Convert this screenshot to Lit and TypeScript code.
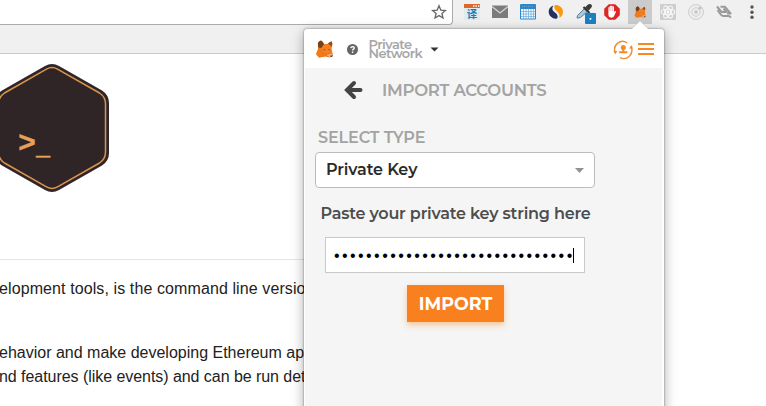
import { LitElement, html, svg, css } from "lit";
import { customElement } from "lit/decorators.js";

const fox = svg`
  <path d="M2 3L5 .5L8 4L11 4L15.500 1.200L16.500 4L15.500 9L17 15.500L14 17.500L9 16.500L3 17.500L0 14L2 9Z" fill="#ec7a1c"/>
  <path d="M1.800 4Q2 1 5 .5Q7.500 1.500 8 4.500L5.500 8L2.500 7.500Z" fill="#75401d"/>
  <path d="M12 3.300L15.500 1.200L16.200 4L15.500 6.500Z" fill="#8f4a1c"/>
  <path d="M5.500 8L8 4.500L11.500 4.500L15 7L13.500 13L8 13Z" fill="#f48023"/>
  <path d="M0 14L4 11L9 16.500L3 17.500Z" fill="#f47a17"/>
  <path d="M7.600 9l1.800 .8l-1.200 .6zM12.200 9.500l1.500-.5l-.6 1.400z" fill="#6a3411"/>
  <path d="M10.500 15L16 13.500L17 15.500L14 17.200Z" fill="#e2b28f"/>
  <path d="M14.500 15.500h2.500l-1 1.500h-1.500z" fill="#4a4543"/>`;

const extensionIcons = [
  svg`<rect x="6" y="4" width="16" height="16" fill="#e3eaed"/>
    <rect x="6" y="4" width="16" height="4" fill="#d96a2b"/>
    <path d="M15 6h1.400M17.500 6h1.400M20 6h1.400" stroke="#fff" stroke-width="1.300"/>
    <text x="14" y="18" text-anchor="middle" font-size="10.500" font-weight="700" fill="#1b7fb5" font-family="Noto Sans CJK SC, sans-serif">译</text>`,
  svg`<path d="M6 5.500h16v12.500H6z" fill="#7b7b7b"/><path d="M6 6.500l8 6.500l8-6.500" fill="none" stroke="#d6d6d6" stroke-width="1.200"/>`,
  svg`<rect x="6" y="4" width="16" height="15.500" rx="1" fill="#2f86c8"/>
    <path d="M7 9h14v9.500H7z" fill="#f5faff"/>
    <path d="M9.500 9v10M12 9v10M14.500 9v10M17 9v10M19.500 9v10M7 11.500h14M7 14h14M7 16.500h14" stroke="#69abd9" stroke-width=".7"/>
    <path d="M8 6.500h12" stroke="#5ea4d7" stroke-width="1" stroke-dasharray="1 1"/>`,
  svg`<path d="M11.500 5.400C6.200 7 5.200 13 9 16.800C10.700 18.500 13.200 19 15 18.400C17 16 14.400 13.600 12.400 12C10 10.200 9.600 7.700 11.500 5.400Z" fill="#25315c"/>
    <path d="M13 5.100C18 4.400 21.400 8.600 21 12.600C20.700 15 19.200 17 17.400 17.900C18 14.800 16.800 12.800 14.600 11C12.300 9.200 11.500 7.200 13 5.100Z" fill="#f99a0c"/>`,
  svg`<path d="M7 18L7.500 15.500L15 8L18 11L10.500 17.500L8 18Z" fill="#a5c8df" stroke="#5b7f9b" stroke-width="1"/>
    <path d="M13.500 7l6 6" stroke="#333" stroke-width="2.200"/>
    <path d="M15 7.500L18 4.500Q20.500 3 21.800 5.200Q22.500 6.500 21 8L18.500 10.800Z" fill="#3a3a3c"/>
    <rect x="15" y="13" width="11" height="11" rx="1" fill="#1b80c0"/><rect x="19.600" y="18" width="1.700" height="1.700" fill="#fff"/>`,
  svg`<path d="M10.800 4.200h6.400l4.600 4.600v6.400L17.200 19.800h-6.400L6.200 15.200V8.800z" fill="#dd2626"/>
    <path d="M10.400 7.500q.7-.9 1.300 0V6.300q.7-.9 1.400 0V5.900q.8-.9 1.500 0V6.700q.7-.9 1.400 0V12q1.200-1.600 2.200-.8L15.900 16.500Q15 17.800 13 17.600Q10.400 17.400 10.400 14.500z" fill="#fff"/>
    <path d="M11.700 7v4M13.100 6.500v4.500M14.600 6.500v4.500" stroke="#e77" stroke-width=".45"/>`,
  svg`<rect x="2" y="0" width="24" height="24" rx="1" fill="#cbcbcb"/><g transform="translate(8.500 6) scale(.66)">${fox}</g>`,
  svg`<rect x="6" y="4" width="16" height="16" fill="#cecece"/>
    <g fill="none" stroke="#f8f8f8" stroke-width="1.100"><ellipse cx="14" cy="12" rx="6.800" ry="2.700"/><ellipse cx="14" cy="12" rx="6.800" ry="2.700" transform="rotate(60 14 12)"/><ellipse cx="14" cy="12" rx="6.800" ry="2.700" transform="rotate(120 14 12)"/></g><circle cx="14" cy="12" r="1.400" fill="#fff"/>`,
  svg`<g fill="none" stroke="#cacaca"><circle cx="14" cy="12" r="7.400"/><circle cx="14" cy="12" r="4.200"/></g><circle cx="14" cy="12" r="1.900" fill="#cacaca"/><circle cx="18" cy="8" r="1.600" fill="#c4c4c4"/>`,
  svg`<g fill="none" stroke="#9a9a9a" stroke-width="2.100" stroke-linejoin="round"><path d="M7 6.500L11.500 12H16.500L13.500 8.500"/><path d="M7.500 10L10.800 14.500Q12 16.200 14 16H19L21 17.500"/><path d="M10.500 6.800h4.500L20.500 13.500H17"/></g>`,
  svg`<g fill="#565656"><circle cx="14" cy="7" r="1.700"/><circle cx="14" cy="12.200" r="1.700"/><circle cx="14" cy="17.200" r="1.700"/></g>`,
];

@customElement("browser-toolbar")
class BrowserToolbar extends LitElement {
  static styles = css`
    :host { display: flex; height: 53px; background: #f0f0f0; border-bottom: 1px solid #c9c9c9; align-items: flex-start; box-sizing: content-box; }
    .address { box-sizing: border-box; width: 453px; height: 25px; background: #fff; border: solid #ababab; border-width: 0 1px 1px 0; border-radius: 0 0 4px 0; display: flex; justify-content: flex-end; padding: 4px 5px 0 0; }
    .extensions { display: flex; margin-left: 5px; }
    svg { display: block; }
  `;
  render() {
    return html`
      <div class="address">
        <svg width="16" height="16" viewBox="0 0 16 16"><path d="M8 1.800L9.800 6.100L14.400 6.500L10.900 9.500L12 14L8 11.600L4 14L5.100 9.500L1.600 6.500L6.200 6.100Z" fill="none" stroke="#666" stroke-width="1.300"/></svg>
      </div>
      <div class="extensions">
        ${extensionIcons.map((icon) => html`<svg width="28" height="25" viewBox="0 0 28 25">${icon}</svg>`)}
      </div>`;
  }
}

@customElement("wallet-popup")
class WalletPopup extends LitElement {
  static styles = css`
    :host { display: block; box-sizing: border-box; width: 360px; height: 400px; background: #fff; border-radius: 3px; box-shadow: 0 0 2px rgba(0,0,0,.55), 0 3px 13px rgba(0,0,0,.33); font-family: Montserrat, Inter, sans-serif; color: #4d4d4d; font-weight: 600; white-space: nowrap; }
    header { display: flex; height: 39px; align-items: flex-start; }
    svg { display: block; flex: none; }
    .fox { margin: 11px 0 0 12px; }
    .help { margin: 15px 0 0 13px; }
    .network { margin: 11px 0 0 10.5px; width: 53px; font-size: 13px; line-height: 9px; font-weight: 600; color: #a6a6a6; }
    .network div { height: 9px; }
    .private { letter-spacing: -.55px; }
    .net { letter-spacing: -.6px; }
    .caret { margin: 18px 0 0 8px; }
    .switch { margin: 11px 0 0 174px; }
    .burger { margin: 13px 0 0 5px; }
    .panel { height: 361px; margin: 0 2px 0 1px; background: #f5f5f5; overflow: hidden; }
    .title { display: flex; height: 60px; padding: 12px 0 0 39px; box-sizing: border-box; color: #a3a3a3; font-size: 16.5px; line-height: 20px; }
    .title span { margin-left: 19px; letter-spacing: -.27px; }
    .label { padding-left: 13px; height: 24px; line-height: 20px; font-size: 16px; letter-spacing: -.1px; color: #a3a3a3; }
    .select { box-sizing: border-box; width: 280px; height: 36px; margin-left: 10px; border: 1px solid #bcbcbc; border-radius: 4px; background: #fff; color: #2a2a2a; display: flex; justify-content: space-between; padding: 6px 10px 0; font-size: 16px; line-height: 22px; letter-spacing: -.12px; }
    .select svg { margin-top: 9px; }
    .hint { margin: 16px 0 0 15.5px; height: 33px; font-size: 16px; line-height: 20px; letter-spacing: -.2px; }
    .field { box-sizing: border-box; width: 260px; height: 36px; margin-left: 20px; border: 1px solid #c9c9c9; background: #fff; display: flex; align-items: center; padding-left: 8px; color: #000; font: 16px/20px "Liberation Sans", sans-serif; letter-spacing: 2.42px; }
    .dots { padding-top: 2px; }
    .cursor { width: 1px; height: 15px; background: #000; margin-left: -2px; }
    .button { width: 97px; height: 37px; margin: 12px 0 0 102px; background: #f8801f; box-shadow: 0 3px 6px rgba(247,134,28,.42); color: #fff; font-size: 17.5px; line-height: 37px; text-align: center; font-weight: 700; }
  `;
  render() {
    return html`
      <header>
        <svg class="fox" width="18" height="18" viewBox="0 0 18 18">${fox}</svg>
        <svg class="help" width="11" height="11" viewBox="0 0 11 11"><circle cx="5.500" cy="5.500" r="5.500" fill="#656565"/><path d="M3.800 4.200Q4 2.600 5.600 2.600Q7.300 2.700 7.200 4.200Q7.100 5 6.200 5.400Q5.600 5.800 5.600 6.500M5.600 7.400v1.500" fill="none" stroke="#fff" stroke-width="1.400"/></svg>
        <div class="network"><div class="private">Private</div><div class="net">Network</div></div>
        <svg class="caret" width="9" height="5" viewBox="0 0 9 5"><path d="M.5.5h8l-4 4z" fill="#333"/></svg>
        <svg class="switch" width="20" height="20" viewBox="0 0 20 20"><g fill="none" stroke="#f58a25" stroke-width="1.400"><path d="M2 12A8 8 0 0 1 14 2.800"/><path d="M18.200 7A8.200 8.200 0 0 1 7 17.600"/></g><path d="M.2 11h4L2.500 14.200zM16 8.500h4L18.500 5z" fill="#f58a25"/><circle cx="10.300" cy="7.600" r="2.500" fill="#f58a25"/><path d="M9.300 9h2v2.300h3v1.900H6.200v-1.900h3.100z" fill="#f58a25"/></svg>
        <svg class="burger" width="16" height="14" viewBox="0 0 16 14"><path d="M0 2h16M0 7h16M0 12h16" stroke="#f58a25" stroke-width="2"/></svg>
      </header>
      <div class="panel">
        <div class="title">
          <svg width="19" height="20" viewBox="0 0 19 20"><path d="M16.500 10H4M10 3L3 10L10 17" fill="none" stroke="#444" stroke-width="4" stroke-linecap="round"/></svg>
          <span>IMPORT ACCOUNTS</span>
        </div>
        <div class="label">SELECT TYPE</div>
        <div class="select"><span>Private Key</span><svg width="9" height="5" viewBox="0 0 9 5"><path d="M0 0h9L4.500 5z" fill="#929292"/></svg></div>
        <div class="hint">Paste your private key string here</div>
        <div class="field"><span class="dots">${"•".repeat(30)}</span><span class="cursor"></span></div>
        <div class="button">IMPORT</div>
      </div>`;
  }
}

@customElement("app-root")
class AppRoot extends LitElement {
  static styles = css`
    :host { display: block; position: relative; width: 766px; height: 406px; overflow: hidden; background: #fff; }
    .logo { display: block; height: 205px; }
    .copy { border-top: 1px solid #e5e5e5; width: 330px; font: 16px/24px "Liberation Sans", sans-serif; color: #222; white-space: nowrap; padding-top: 17px; }
    p { margin: 0 0 40px -1px; }
    .lead { letter-spacing: .1px; }
    .tight { letter-spacing: -.05px; }
    .popup { position: absolute; left: 304px; top: 29px; }
    .pointer { position: absolute; left: 630px; top: 20px; }
  `;
  render() {
    return html`
      <browser-toolbar></browser-toolbar>
      <svg class="logo" width="130" height="205" viewBox="0 54 130 205">
        <path d="M45 66Q52 62 59 66L102 90.500Q109 95 109 103V153Q109 161 102 165.500L59 190Q52 194 45 190L2 165.500Q-5 161 -5 153V103Q-5 95 2 90.500Z" fill="#2f2426"/>
        <path d="M46.500 69.200Q52 66 57.500 69.200L99.500 93Q105.500 97 105.500 104V152Q105.500 159 99.500 163L57.500 186.800Q52 190 46.500 186.800L4.500 163Q-1.500 159 -1.500 152V104Q-1.500 97 4.500 93Z" fill="none" stroke="#d9944f" stroke-width="1.500"/>
        <g font-family="Liberation Mono, monospace" fill="#e5a05a" stroke="#e5a05a" font-weight="700"><text x="18" y="152" font-size="30" stroke-width=".3">&gt;</text><text x="36" y="155" font-size="23.500" stroke-width=".5">_</text></g>
      </svg>
      <div class="copy">
        <p class="lead">elopment tools, is the command line versio</p>
        <p>ehavior and make developing Ethereum ap<br><span class="tight">nd features (like events) and can be run det</span></p>
      </div>
      <wallet-popup class="popup"></wallet-popup>
      <svg class="pointer" width="20" height="10" viewBox="0 0 20 10"><path d="M1 9.500L10 .8L19 9.500V10H1Z" fill="#fff"/><path d="M1 9.300L10 .8L19 9.300" fill="none" stroke="#bbb" stroke-width=".6"/></svg>`;
  }
}
